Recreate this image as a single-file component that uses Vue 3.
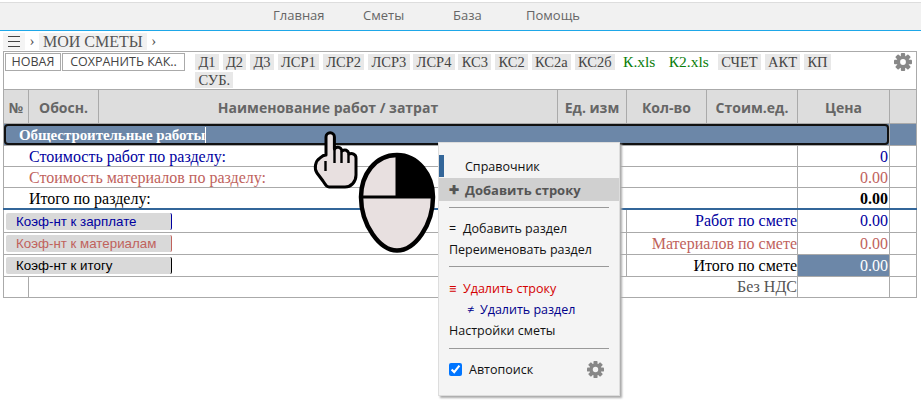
<script setup>
const navLinks = ['Главная', 'Сметы', 'База', 'Помощь']

const docButtons = [
  { label: 'Д1' }, { label: 'Д2' }, { label: 'Д3' },
  { label: 'ЛСР1' }, { label: 'ЛСР2' }, { label: 'ЛСР3' }, { label: 'ЛСР4' },
  { label: 'КС3' }, { label: 'КС2' }, { label: 'КС2а' }, { label: 'КС2б' },
  { label: 'К.xls', xls: true }, { label: 'К2.xls', xls: true },
  { label: 'СЧЕТ' }, { label: 'АКТ' }, { label: 'КП' }, { label: 'СУБ.' }
]

const headers = ['№', 'Обосн.', 'Наименование работ / затрат', 'Ед. изм', 'Кол-во', 'Стоим.ед.', 'Цена', '']

const sectionRows = [
  { label: 'Стоимость работ по разделу:', value: '0', tone: 'work' },
  { label: 'Стоимость материалов по разделу:', value: '0.00', tone: 'mat' },
  { label: 'Итого по разделу:', value: '0.00', tone: 'total', bold: true }
]

const coefRows = [
  { btn: 'Коэф-нт к зарплате', label: 'Работ по смете', value: '0.00', tone: 'work' },
  { btn: 'Коэф-нт к материалам', label: 'Материалов по смете', value: '0.00', tone: 'mat' },
  { btn: 'Коэф-нт к итогу', label: 'Итого по смете', value: '0.00', tone: 'total', hl: true }
]

const teeth = [0, 45, 90, 135]
</script>

<template>
  <div class="page">
    <nav class="topnav">
      <a v-for="l in navLinks" :key="l">{{ l }}</a>
    </nav>

    <div class="crumbs">
      <span class="burger">
        <svg viewBox="0 0 12 11" width="12" height="11">
          <path d="M0 .5H12M0 5.5H12M0 10.5H12" stroke="#444" fill="none" />
        </svg>
      </span>
      <span class="sep">›</span>
      <span class="crumb">МОИ СМЕТЫ</span>
      <span class="sep">›</span>
    </div>

    <div class="sheet">
      <div class="toolbar">
        <div class="actions">
          <button class="act new">НОВАЯ</button>
          <button class="act save">СОХРАНИТЬ КАК..</button>
        </div>
        <div class="docs">
          <span v-for="d in docButtons" :key="d.label" class="doc" :class="{ xls: d.xls }">{{ d.label }}</span>
        </div>
        <svg class="gear" viewBox="0 0 20 20">
          <rect v-for="t in teeth" :key="t" x="7.6" y="0" width="4.8" height="20" rx="1" :transform="`rotate(${t} 10 10)`" />
          <circle cx="10" cy="10" r="5.2" fill="none" stroke="#888" stroke-width="3.6" />
          <circle cx="10" cy="10" r="3.2" fill="#fff" />
        </svg>
      </div>

      <table class="grid">
        <colgroup>
          <col style="width: 25px" /><col style="width: 70px" /><col style="width: 459px" />
          <col style="width: 69px" /><col style="width: 80px" /><col style="width: 91px" />
          <col style="width: 92px" /><col style="width: 27px" />
        </colgroup>
        <thead>
          <tr>
            <th v-for="(h, i) in headers" :key="i">{{ h }}</th>
          </tr>
        </thead>
        <tbody>
          <tr class="section">
            <td colspan="7" class="section-cell">
              <div class="section-box"><span class="section-name">Общестроительные работы</span></div>
            </td>
            <td class="blue"></td>
          </tr>
          <tr v-for="r in sectionRows" :key="r.label" class="sum-row" :class="r.tone">
            <td colspan="6" class="row-label">{{ r.label }}</td>
            <td class="num" :class="{ strong: r.bold }">{{ r.value }}</td>
            <td></td>
          </tr>
          <tr v-for="(r, i) in coefRows" :key="r.btn" :class="[r.tone, 'coef-row', { first: i === 0 }]">
            <td colspan="4" class="coef-cell"><div class="coef">{{ r.btn }}</div></td>
            <td colspan="2" class="right">{{ r.label }}</td>
            <td class="num" :class="{ blue: r.hl }">{{ r.value }}</td>
            <td></td>
          </tr>
          <tr>
            <td></td>
            <td colspan="5" class="right muted">Без НДС</td>
            <td></td>
            <td></td>
          </tr>
        </tbody>
      </table>
    </div>

    <!-- указатель и мышь поверх таблицы -->
    <svg class="pointer" viewBox="0 0 125 125">
      <g transform="translate(-312 -131)">
        <path class="outline" d="M326 137 a4.2 4.2 0 0 1 8.4 0 L334.4 149 C337 146 341 147 342 151 C345 149 348 150 349 154 C352 153 356 154 356 158 L356 175 C356 182 351 187 345 187 L329 187 C326 187 325 184 323 181 L317 173 C314 169 315 161 320 158 C322 156 324 155 326 155 Z" />
        <path class="ink" d="M325.5 161 L325.5 171 M334.5 149 L334.5 163 M341.5 151 L341.5 163 M348.5 154 L348.5 163" />
        <path class="egg" d="M397 155 C375 155 361 175 361 197 C361 225 380 250.5 397 250.5 C415 250.5 433 225 433 197 C433 175 418 155 397 155 Z" />
        <path d="M397 155 C418 155 433 175 433 197 L397 197 Z" fill="#000" />
        <path class="ink wide" d="M361 197 L433 197 M397 155 L397 197" />
      </g>
    </svg>

    <div class="menu">
      <div class="marker"></div>
      <div class="item ref">Справочник</div>
      <div class="item hover"><span class="plus">✚</span>Добавить строку</div>
      <hr class="first-hr" />
      <div class="item"><span class="mark">=</span>Добавить раздел</div>
      <div class="item">Переименовать раздел</div>
      <hr class="second-hr" />
      <div class="item red"><span class="mark">≡</span>Удалить строку</div>
      <div class="item navy indent"><span class="mark small-mark">≠</span>Удалить раздел</div>
      <div class="item">Настройки сметы</div>
      <hr />
      <label class="auto">
        <input type="checkbox" checked />
        <span>Автопоиск</span>
        <svg class="gear small" viewBox="0 0 20 20">
          <rect v-for="t in teeth" :key="t" x="7.6" y="0" width="4.8" height="20" rx="1" :transform="`rotate(${t} 10 10)`" />
          <circle cx="10" cy="10" r="5.2" fill="none" stroke="#888" stroke-width="3.6" />
          <circle cx="10" cy="10" r="3.2" fill="#f4f4f4" />
        </svg>
      </label>
    </div>
  </div>
</template>

<style scoped>
.page {
  position: relative;
  width: 921px;
  height: 405px;
  overflow: hidden;
  background: #fff;
  font-family: "Open Sans", "Noto Sans", sans-serif;
}

.topnav {
  display: grid;
  grid-template-columns: 90px 90px 73px auto;
  height: 27px;
  box-sizing: content-box;
  margin-top: 2px;
  padding-left: 273px;
  align-items: start;
  line-height: 25px;
  background: #f1f1f1;
  border-top: 1px solid #ddd;
  border-bottom: 1px solid #1ea7e8;
  font-size: 13px;
  color: #666;
}

.crumbs {
  display: flex;
  align-items: center;
  height: 20px;
  padding-left: 3px;
  font-family: "Liberation Serif", serif;
  color: #555;
}

.burger {
  display: flex;
  align-items: center;
  width: 22px;
  height: 17px;
  padding-left: 5px;
  box-sizing: border-box;
  background: #f4f4f4;
}

.sep {
  width: 14px;
  text-align: center;
  font-size: 15px;
}

.crumb {
  padding: 0 4px;
  background: #f1f1f1;
  font-size: 16px;
  line-height: 17px;
}

.sheet {
  width: 914px;
  margin-left: 3px;
}

.toolbar {
  position: relative;
  display: flex;
  height: 38px;
  box-sizing: border-box;
  border: 1px solid #aaa;
  border-bottom: 0;
  padding: 1px 0 0 1px;
}

.actions {
  display: flex;
  gap: 1px;
  width: 190px;
  flex: none;
  align-items: flex-start;
}

.act {
  height: 18px;
  padding: 0;
  border: 1px solid #aaa;
  background: #fff;
  font-family: "Open Sans", sans-serif;
  font-size: 12.5px;
  line-height: 16px;
  color: #444;
  white-space: nowrap;
}

.act.new {
  width: 56px;
}

.act.save {
  width: 123px;
}

.docs {
  display: flex;
  flex-wrap: wrap;
  gap: 2px 3.6px;
  width: 660px;
  align-content: flex-start;
  padding-top: 1px;
}

.doc {
  height: 16px;
  padding: 0 3.4px;
  background: #e8e8e8;
  font-family: "Liberation Serif", serif;
  font-size: 14.5px;
  line-height: 16px;
  color: #444;
}

.doc.xls {
  margin: 0 2px 0 1px;
  background: none;
  font-size: 15.5px;
  color: #0a7d0a;
}

.gear {
  position: absolute;
  top: 1px;
  right: 4px;
  width: 18px;
  height: 18px;
  fill: #888;
}

.gear.small {
  position: static;
  width: 17px;
  height: 17px;
  margin-left: auto;
}

.grid {
  width: 914px;
  table-layout: fixed;
  border-collapse: collapse;
  font-family: "Liberation Serif", serif;
  font-size: 16px;
}

.grid th,
.grid td {
  padding: 0;
  border: 1px solid #aaa;
}

.grid th {
  height: 34px;
  padding-top: 1px;
  box-sizing: border-box;
  background: #ddd;
  font-family: "Open Sans", sans-serif;
  font-size: 14px;
  font-weight: 700;
  color: #666;
}

.grid td {
  height: 20px;
  line-height: 18px;
  white-space: nowrap;
}

.sum-row td {
  vertical-align: bottom;
}

.section td {
  height: 21px;
  background: #6c87a8;
}

.section-cell {
  position: relative;
  border-color: #6c87a8;
}

.section-box {
  height: 17px;
  box-sizing: content-box;
  border: 2px solid #111;
  border-radius: 4px;
  line-height: 19px;
  color: #fff;
  font-size: 15px;
  font-weight: 700;
  letter-spacing: -0.08px;
  padding-left: 13px;
}

.section-name {
  border-right: 1px solid #fff;
}

.row-label {
  padding-left: 25px !important;
}

.num {
  text-align: right;
  padding-right: 1px !important;
}

.right {
  text-align: right;
}

.work { color: #0000a0; }
.mat { color: #c0625c; }
.total { color: #000; }
.muted { color: #555; }
.strong { font-weight: 700; }

.grid td.blue {
  background: #6c87a8;
  color: #fff;
}

.coef-row td {
  height: 21px;
}

.coef-row.first td {
  height: 22px;
  border-top: 2px solid #336699;
}

.coef-cell {
  padding: 0 0 0 2px !important;
}

.coef {
  width: 166px;
  height: 17px;
  padding-left: 10px;
  box-sizing: border-box;
  background: #d9d9d9;
  border-right: 1px solid currentColor;
  border-radius: 2px;
  font-family: "Liberation Sans", sans-serif;
  font-size: 13.33px;
  line-height: 17px;
}

.pointer {
  position: absolute;
  left: 312px;
  top: 131px;
  width: 125px;
  height: 125px;
}

.outline {
  fill: #e8e0e0;
  stroke: #000;
  stroke-width: 3;
  stroke-linejoin: round;
}

.ink {
  fill: none;
  stroke: #000;
  stroke-width: 2.4;
}

.egg {
  fill: #e8e0e0;
  stroke: #000;
  stroke-width: 4.5;
}

.ink.wide {
  stroke-width: 3;
}

.menu {
  position: absolute;
  left: 438px;
  top: 142px;
  width: 182px;
  height: 254px;
  box-sizing: border-box;
  padding-top: 13px;
  background: #f4f4f4;
  border: 1px solid #ddd;
  box-shadow: 2px 2px 2px #aaa;
  font-size: 12.5px;
  color: #111;
}

.marker {
  position: absolute;
  left: 0;
  top: 12px;
  width: 5px;
  height: 22px;
  background: #336699;
}

.item {
  display: flex;
  align-items: center;
  height: 21px;
  padding-left: 10px;
  white-space: nowrap;
}

.item.ref {
  height: 21px;
  margin-bottom: 1px;
  padding-left: 26px;
}

.item.hover {
  height: 23px;
  background: #d0d0d0;
  color: #555;
  font-size: 13px;
  font-weight: 700;
}

.plus {
  width: 16px;
  font-size: 12px;
}

.mark {
  width: 14px;
}

.small-mark {
  width: 13px;
}

.item.red {
  height: 22px;
  color: #d40000;
}

.item.navy { color: #00008b; }
.item.indent { padding-left: 28px; }

.menu hr {
  height: 1px;
  margin: 7px 10px 10px;
  border: 0;
  background: #999;
}

.menu hr.first-hr,
.menu hr.second-hr {
  margin-top: 6px;
}

.auto {
  display: flex;
  align-items: center;
  gap: 7px;
  height: 21px;
  padding: 0 15px 0 10px;
}

.auto input {
  width: 13px;
  height: 13px;
  margin: 0;
}
</style>
